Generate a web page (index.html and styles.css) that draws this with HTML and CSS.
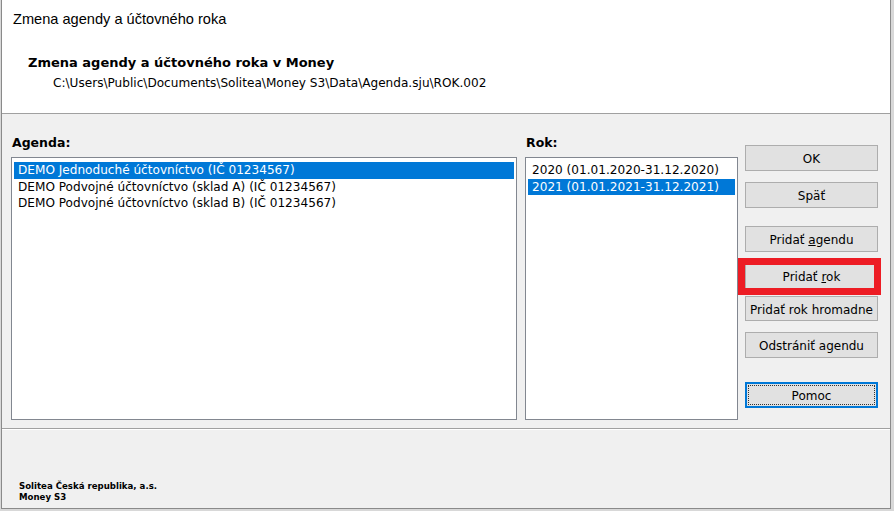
FILE: index.html
```html
<!DOCTYPE html>
<html lang="sk">
<head>
  <meta charset="UTF-8">
  <title>Zmena agendy a účtovného roka</title>
  <link rel="stylesheet" href="styles.css">
</head>
<body>
  <div class="window">
    <div class="titlebar">Zmena agendy a účtovného roka</div>
    <div class="header">
      <h1>Zmena agendy a účtovného roka v Money</h1>
      <p class="path">C:\Users\Public\Documents\Solitea\Money S3\Data\Agenda.sju\ROK.002</p>
    </div>
    <div class="content">
      <div class="col col-agenda">
        <label>Agenda:</label>
        <ul class="listbox">
          <li class="selected">DEMO Jednoduché účtovníctvo (IČ 01234567)</li>
          <li>DEMO Podvojné účtovníctvo (sklad A) (IČ 01234567)</li>
          <li>DEMO Podvojné účtovníctvo (sklad B) (IČ 01234567)</li>
        </ul>
      </div>
      <div class="col col-rok">
        <label>Rok:</label>
        <ul class="listbox">
          <li>2020 (01.01.2020-31.12.2020)</li>
          <li class="selected">2021 (01.01.2021-31.12.2021)</li>
        </ul>
      </div>
      <div class="buttons">
        <button class="btn btn-ok">OK</button>
        <button class="btn btn-back">Späť</button>
        <button class="btn btn-add-agenda">Pridať <u>a</u>gendu</button>
        <button class="btn btn-add-year marked">Pridať <u>r</u>ok</button>
        <button class="btn btn-bulk">Pridať rok hromadne</button>
        <button class="btn btn-remove">Odstrániť agendu</button>
        <button class="btn btn-help focused"><span>Pomoc</span></button>
      </div>
    </div>
    <div class="footer">
      <p>Solitea Česká republika, a.s.</p>
      <p>Money S3</p>
    </div>
  </div>
</body>
</html>
```

FILE: styles.css
```css
:root {
  --face: #f0f0f0;
  --line: #a0a0a0;
  --select: #0078d7;
  --btn-bg: #e1e1e1;
  --btn-border: #adadad;
  --ui-font: 'DejaVu Sans', 'Liberation Sans', sans-serif;
  --title-font: 'Liberation Sans', 'DejaVu Sans', sans-serif;
}
* { box-sizing: border-box; margin: 0; padding: 0; }
body { background: #d8d8d8; font-family: var(--ui-font); font-size: 12px; color: #000; width: 894px; height: 511px; overflow: hidden; }
.window { width: 890px; height: 509px; margin-left: 1px; border: 1px solid #8a8a8a; border-top: none; background: var(--face); display: flex; flex-direction: column; }

.titlebar { background: #fff; height: 38px; padding: 10px 0 0 11px; font-family: var(--title-font); font-size: 14.6px; line-height: 18px; }
.header { background: #fff; height: 76px; border-bottom: 1px solid var(--line); padding: 16px 0 0 26px; }
.header h1 { font-size: 13px; font-weight: bold; line-height: 18px; }
.header .path { margin-top: 4px; padding-left: 25px; font-size: 12.1px; line-height: 15px; }

.content { display: flex; height: 314px; padding: 21px 0 0 9px; }
.col { display: flex; flex-direction: column; }
.col label { font-weight: bold; font-size: 12.5px; line-height: 16px; margin: 0 0 6px 1px; }
.col-agenda { width: 506px; }
.col-rok { width: 213px; margin-left: 8px; }
.listbox { list-style: none; height: 263px; background: #fff; border: 1px solid #828790; padding: 4px 2px; }
.listbox li { line-height: 16.5px; padding-left: 4px; white-space: nowrap; font-size: 12.1px; }
.listbox li.selected { background: var(--select); color: #fff; }

.buttons { display: flex; flex-direction: column; width: 133px; margin-left: 7px; padding-top: 10px; }
.btn { font-family: var(--ui-font); font-size: 12px; height: 26px; width: 133px; padding-top: 2px; background: var(--btn-bg); border: 1px solid var(--btn-border); color: #000; white-space: nowrap; }
.btn u { text-decoration: underline; }
.btn-back, .btn-add-year, .btn-remove { margin-top: 11px; }
.btn-add-agenda { margin-top: 18px; }
.btn-bulk { margin-top: 7px; height: 25px; }
.btn-help { margin-top: 24px; }
.marked { position: relative; }
.marked::after { content: ''; position: absolute; left: -8px; top: -6px; right: -4px; bottom: -7px; border: 7px solid #ed1c24; }
.focused { border: 2px solid var(--select); padding: 1px; }
.focused span { display: block; height: 100%; border: 1px dotted #333; line-height: 19px; padding-top: 1px; }

.footer { flex: 1; border-top: 1px solid var(--line); box-shadow: inset 0 1px 0 #fff; padding: 52px 0 0 17px; font-size: 8.6px; font-weight: bold; line-height: 11px; }
```
